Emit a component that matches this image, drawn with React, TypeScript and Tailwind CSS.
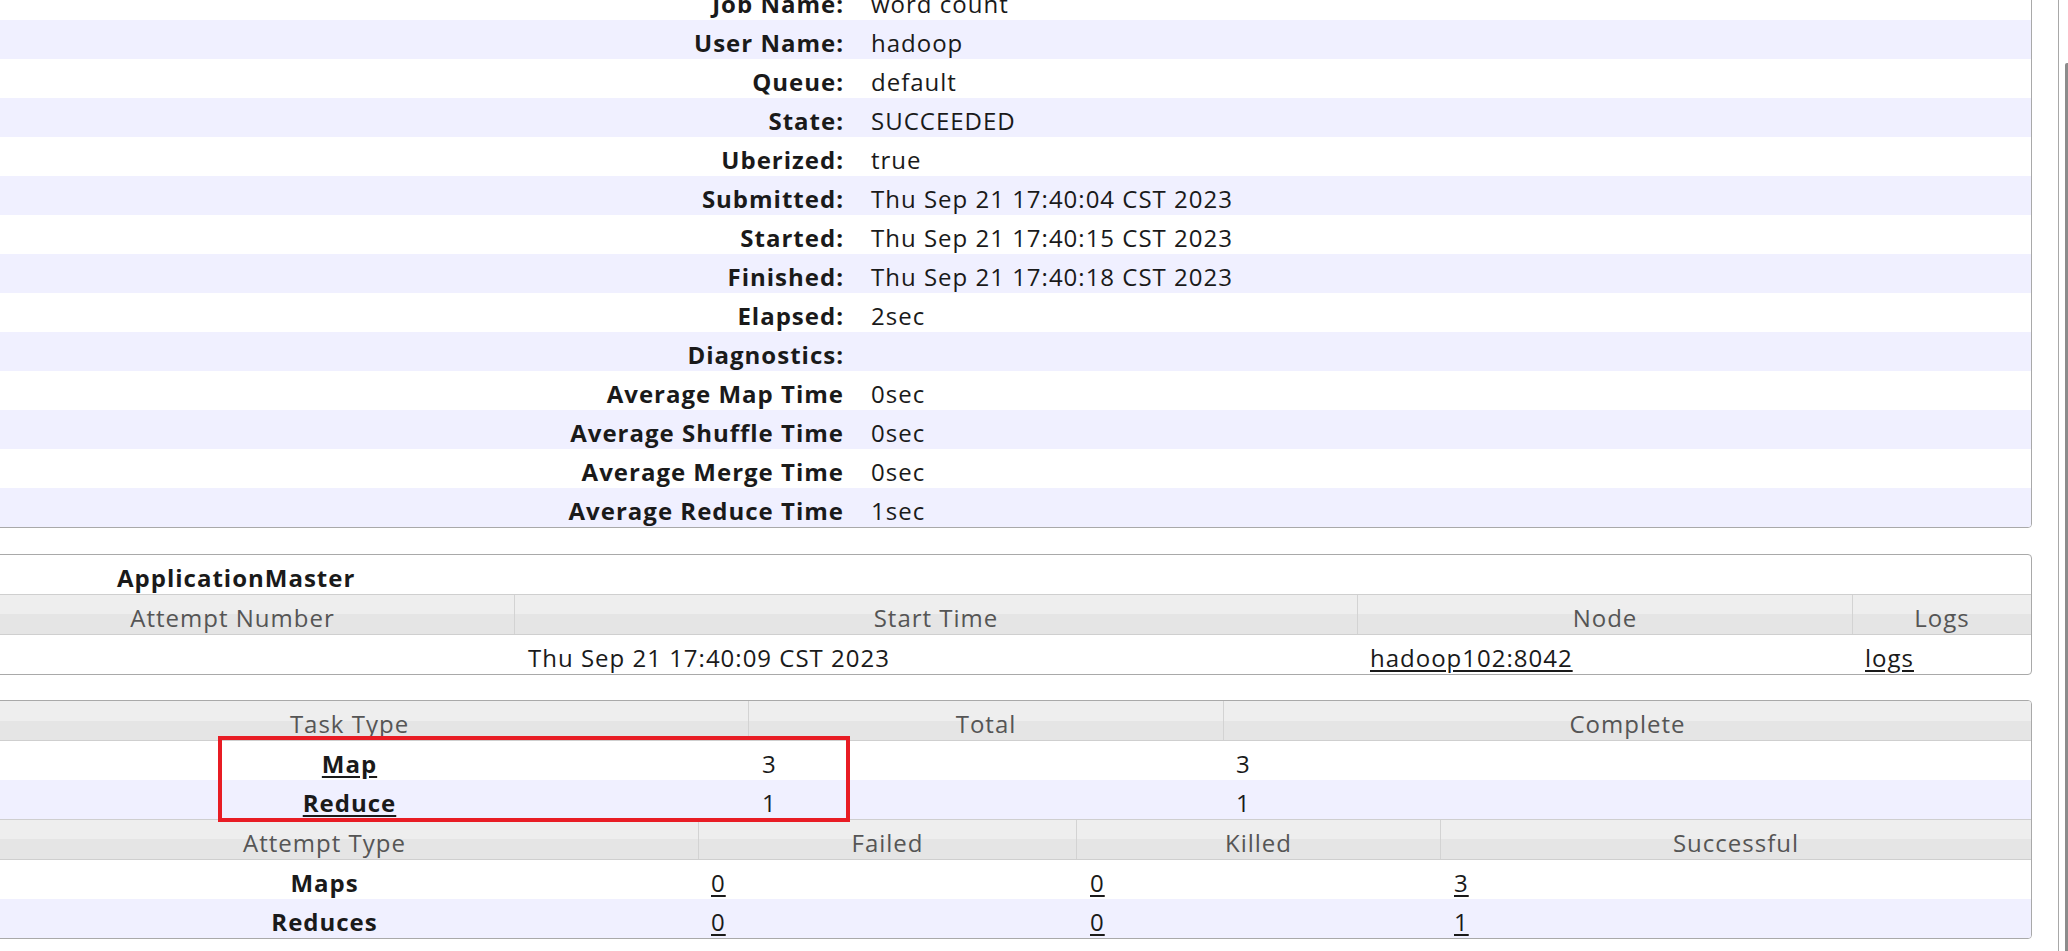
import React from 'react';

interface InfoRow {
  label: string;
  value: string;
}

const infoRows: InfoRow[] = [
  { label: 'Job Name:', value: 'word count' },
  { label: 'User Name:', value: 'hadoop' },
  { label: 'Queue:', value: 'default' },
  { label: 'State:', value: 'SUCCEEDED' },
  { label: 'Uberized:', value: 'true' },
  { label: 'Submitted:', value: 'Thu Sep 21 17:40:04 CST 2023' },
  { label: 'Started:', value: 'Thu Sep 21 17:40:15 CST 2023' },
  { label: 'Finished:', value: 'Thu Sep 21 17:40:18 CST 2023' },
  { label: 'Elapsed:', value: '2sec' },
  { label: 'Diagnostics:', value: '' },
  { label: 'Average Map Time', value: '0sec' },
  { label: 'Average Shuffle Time', value: '0sec' },
  { label: 'Average Merge Time', value: '0sec' },
  { label: 'Average Reduce Time', value: '1sec' },
];

// shared cell metrics: 39px rows, baseline ~7px above the bottom
const cell = 'h-[39px] pt-[6px] leading-[33px] whitespace-nowrap';
const headCell =
  'h-[39px] pt-[6px] leading-[33px] text-center text-[#555] whitespace-nowrap';
const headRow =
  'grid border-y border-[#cfcfcf] bg-[linear-gradient(to_bottom,#eeeeee_50%,#e5e5e5_50%)]';
const boxCls = 'rounded-[4px] border border-[#a9a9a9] overflow-hidden bg-white';

const Link: React.FC<{ children: React.ReactNode; bold?: boolean }> = ({ children, bold }) => (
  <a className={`underline underline-offset-[3px] text-[#1a1a1a] ${bold ? 'font-bold' : ''}`}>{children}</a>
);

const App: React.FC = () => {
  return (
    <div
      className="flex w-[2068px] h-[951px] overflow-hidden bg-white text-[24px] tracking-[1px] text-[#1a1a1a]"
      style={{ fontFamily: '"Open Sans", "Noto Sans", sans-serif' }}
    >
      {/* page content, scrolled a bit to the right */}
      <div className="flex-1 min-w-0 overflow-hidden">
        <div className="ml-[-50px] mr-[26px]">
          {/* job overview */}
          <div className={`${boxCls} mt-[-20px]`}>
            {infoRows.map((row, i) => (
              <div
                key={row.label}
                className={`grid grid-cols-[906px_1fr] ${i % 2 === 1 ? 'bg-[#f0f0ff]' : 'bg-white'}`}
              >
                <div className={`${cell} text-right font-bold pr-[13px]`}>{row.label}</div>
                <div className={`${cell} pl-[14px]`}>{row.value}</div>
              </div>
            ))}
          </div>

          {/* application master */}
          <div className={`${boxCls} mt-[26px]`}>
            <div className={`${cell} font-bold pl-[166px]`}>ApplicationMaster</div>
            <div className={`${headRow} grid-cols-[563px_843px_495px_179px]`}>
              <div className={headCell}>Attempt Number</div>
              <div className={`${headCell} border-l border-[#d3d3d3]`}>Start Time</div>
              <div className={`${headCell} border-l border-[#d3d3d3]`}>Node</div>
              <div className={`${headCell} border-l border-[#d3d3d3]`}>Logs</div>
            </div>
            <div className="grid grid-cols-[563px_843px_495px_179px]">
              <div className={cell}></div>
              <div className={`${cell} pl-[14px]`}>Thu Sep 21 17:40:09 CST 2023</div>
              <div className={`${cell} pl-[13px]`}>
                <Link>hadoop102:8042</Link>
              </div>
              <div className={`${cell} pl-[13px]`}>
                <Link>logs</Link>
              </div>
            </div>
          </div>

          {/* tasks and attempts */}
          <div className={`${boxCls} mt-[25px] relative`}>
            <div className={`${headRow} border-t-0 grid-cols-[797px_475px_808px]`}>
              <div className={headCell}>Task Type</div>
              <div className={`${headCell} border-l border-[#d3d3d3]`}>Total</div>
              <div className={`${headCell} border-l border-[#d3d3d3]`}>Complete</div>
            </div>
            {[
              { type: 'Map', total: '3', done: '3' },
              { type: 'Reduce', total: '1', done: '1' },
            ].map((t, i) => (
              <div
                key={t.type}
                className={`grid grid-cols-[797px_475px_808px] ${i % 2 === 1 ? 'bg-[#f0f0ff]' : 'bg-white'}`}
              >
                <div className={`${cell} text-center`}>
                  <Link bold>{t.type}</Link>
                </div>
                <div className={`${cell} pl-[14px]`}>{t.total}</div>
                <div className={`${cell} pl-[13px]`}>{t.done}</div>
              </div>
            ))}
            <div className={`${headRow} grid-cols-[747px_378px_364px_591px]`}>
              <div className={headCell}>Attempt Type</div>
              <div className={`${headCell} border-l border-[#d3d3d3]`}>Failed</div>
              <div className={`${headCell} border-l border-[#d3d3d3]`}>Killed</div>
              <div className={`${headCell} border-l border-[#d3d3d3]`}>Successful</div>
            </div>
            {[
              { type: 'Maps', failed: '0', killed: '0', ok: '3' },
              { type: 'Reduces', failed: '0', killed: '0', ok: '1' },
            ].map((a, i) => (
              <div
                key={a.type}
                className={`grid grid-cols-[747px_378px_364px_591px] ${i % 2 === 1 ? 'bg-[#f0f0ff]' : 'bg-white'}`}
              >
                <div className={`${cell} text-center font-bold`}>{a.type}</div>
                <div className={`${cell} pl-[13px]`}>
                  <Link>{a.failed}</Link>
                </div>
                <div className={`${cell} pl-[14px]`}>
                  <Link>{a.killed}</Link>
                </div>
                <div className={`${cell} pl-[14px]`}>
                  <Link>{a.ok}</Link>
                </div>
              </div>
            ))}

            {/* red annotation box */}
            <div className="absolute left-[267px] top-[35px] w-[632px] h-[86px] border-[4px] border-[#e81c24] pointer-events-none" />
          </div>
        </div>
      </div>

      {/* window scrollbar */}
      <div className="w-[10px] shrink-0 border-l border-[#a8a8a8] bg-white flex justify-end pt-[63px]">
        <div className="w-[3px] h-full bg-[#8c8c8c] rounded-tl-[2px]" />
      </div>
    </div>
  );
};

export default App;
